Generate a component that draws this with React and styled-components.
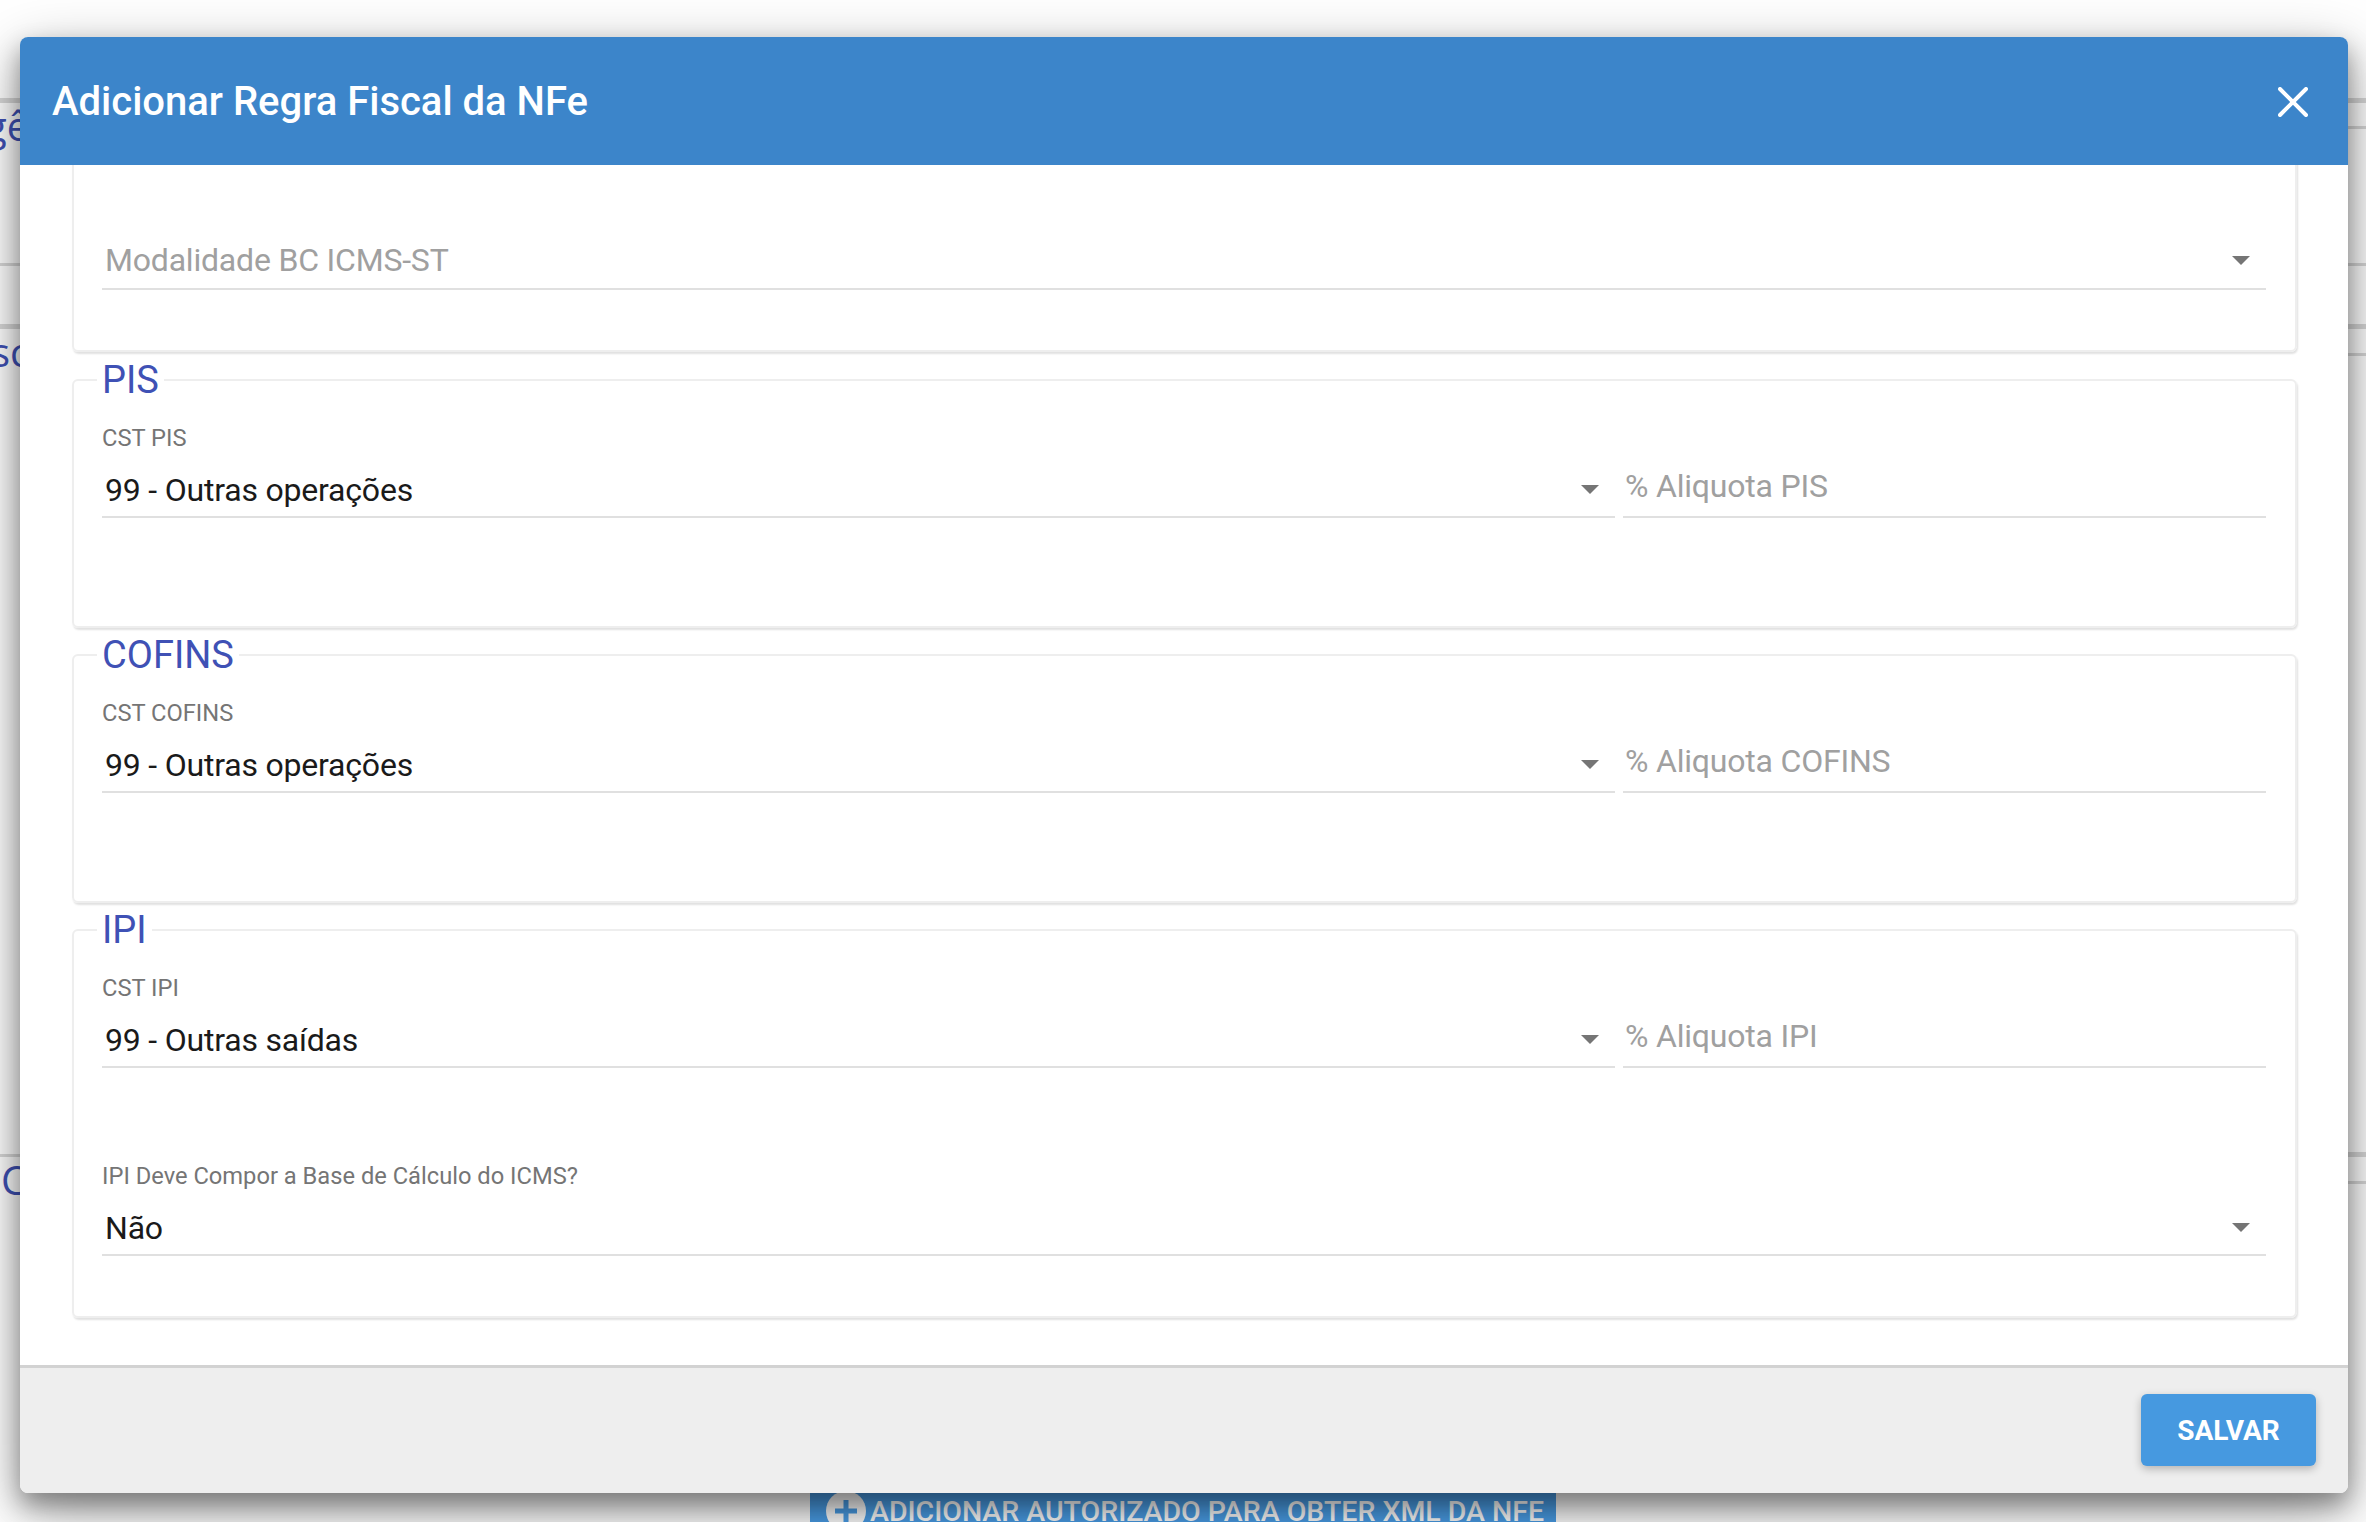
import React from "react";
import styled, { createGlobalStyle } from "styled-components";

const GlobalStyle = createGlobalStyle`
  html, body {
    margin: 0;
    padding: 0;
    background: #fff;
    font-family: Roboto, "Liberation Sans", sans-serif;
  }
`;

const Page = styled.div`
  position: relative;
  width: 2366px;
  height: 1522px;
  overflow: hidden;
  background: #fff;
`;

const BackRows = styled.div`
  display: grid;
  grid-template-columns: 1fr 1fr;
  height: 1476px;
`;

const BackColumn = styled.div`
  display: flex;
  flex-direction: column;
`;

const BackRow = styled.div`
  box-sizing: border-box;
  height: ${(p) => p.$height}px;
  border-bottom: ${(p) => p.$line || 3}px solid #d8d8d8;
  overflow: hidden;
`;

const BackHeading = styled.div`
  font-family: "Open Sans", sans-serif;
  font-size: 40px;
  line-height: 46px;
  color: #3f51b5;
  margin-left: ${(p) => p.$shift}px;
  white-space: nowrap;
`;

const BackButtonRow = styled.div`
  display: flex;
  justify-content: center;
`;

const BackButton = styled.div`
  display: flex;
  align-items: center;
  gap: 4px;
  box-sizing: border-box;
  width: 746px;
  height: 60px;
  padding: 10px 12px 0 16px;
  background: #4a9ee8;
  color: #fff;
  font-size: 28.5px;
  font-weight: 500;
  white-space: nowrap;
`;

const PlusCircle = styled.svg`
  width: 40px;
  height: 40px;
  flex: none;
`;

const Modal = styled.div`
  position: absolute;
  top: 37px;
  left: 20px;
  display: flex;
  flex-direction: column;
  width: 2328px;
  height: 1456px;
  border-radius: 8px;
  overflow: hidden;
  background: #fff;
  box-shadow: 0 12px 24px rgba(0, 0, 0, 0.35), 0 18px 60px rgba(0, 0, 0, 0.35);
`;

const ModalHeader = styled.header`
  display: flex;
  align-items: center;
  justify-content: space-between;
  flex: none;
  box-sizing: border-box;
  height: 128px;
  padding: 0 40px 0 32px;
  background: #3c85ca;
  color: #fff;
`;

const ModalTitle = styled.h2`
  margin: 0;
  font-size: 40px;
  font-weight: 500;
`;

const CloseIcon = styled.svg`
  width: 30px;
  height: 30px;
  margin-top: 2px;
`;

const ModalBody = styled.div`
  flex: 1;
  min-height: 0;
  overflow: hidden;
  padding: 0 51px 0 52px;
`;

const ClippedTop = styled.div`
  margin-top: -30px;
`;

const Group = styled.fieldset`
  box-sizing: border-box;
  height: ${(p) => p.$height}px;
  margin: 0 0 ${(p) => p.$after || 0}px;
  padding: 0 29px 0 28px;
  border: 2px solid #eeeeee;
  border-radius: 6px;
  box-shadow: 1px 2px 2px rgba(0, 0, 0, 0.12);
`;

const GroupTitle = styled.legend`
  margin-left: -5px;
  padding: 0 5px;
  font-size: 38px;
  line-height: 46px;
  color: #3f51b5;
`;

const FieldRow = styled.div`
  display: grid;
  grid-template-columns: 1513px 643px;
  gap: 8px;
  margin-top: ${(p) => p.$top}px;
`;

const Field = styled.div`
  display: flex;
  flex-direction: column;
  margin-top: ${(p) => p.$top || 0}px;
`;

const FieldLabel = styled.label`
  font-size: 23.7px;
  line-height: 28px;
  color: #757575;
`;

const SelectBox = styled.div`
  display: flex;
  align-items: center;
  justify-content: space-between;
  box-sizing: border-box;
  height: 66px;
  padding: ${(p) => (p.$muted ? 8 : 11)}px 16px 0 3px;
  border-bottom: 2px solid #e0e0e0;
  font-size: 32px;
  letter-spacing: -0.2px;
  color: ${(p) => (p.$muted ? "#a0a0a0" : "#1a1a1a")};
`;

const Caret = styled.svg`
  width: 18px;
  height: 9px;
  flex: none;
`;

const InputBox = styled.div`
  display: flex;
  align-items: center;
  box-sizing: border-box;
  align-self: end;
  height: 66px;
  padding: 6px 0 2px 2px;
  border-bottom: 2px solid #e0e0e0;
  font-size: 32px;
  letter-spacing: -0.2px;
  color: #a0a0a0;
`;

const ModalFooter = styled.footer`
  display: flex;
  justify-content: flex-end;
  flex: none;
  box-sizing: border-box;
  height: 128px;
  padding: 26px 32px 0 0;
  border-top: 3px solid #d2d2d2;
  background: #eeeeee;
`;

const SaveButton = styled.button`
  width: 175px;
  height: 72px;
  border: 0;
  border-radius: 6px;
  background: #4699e0;
  color: #fff;
  font-family: inherit;
  font-size: 28px;
  font-weight: 700;
  box-shadow: 0 3px 8px rgba(0, 0, 0, 0.25);
`;

const CaretDown = () => (
  <Caret viewBox="0 0 18 9">
    <path d="M0 0h18L9 9z" fill="#757575" />
  </Caret>
);

const Select = ({ label, value, muted, top }) => (
  <Field $top={top}>
    {label && <FieldLabel>{label}</FieldLabel>}
    <SelectBox $muted={muted}>
      <span>{value}</span>
      <CaretDown />
    </SelectBox>
  </Field>
);

const leftRows = [
  { height: 103, line: 5 },
  { height: 163, text: "gê", shift: -15 },
  { height: 63, line: 5 },
  { height: 828, text: "sc", shift: -9 },
];

const rightRows = [
  { height: 103, line: 5 },
  { height: 26 },
  { height: 137 },
  { height: 63, line: 5 },
  { height: 27 },
  { height: 801, line: 5 },
  { height: 27 },
];

const groups = [
  { title: "PIS", label: "CST PIS", value: "99 - Outras operações", rate: "% Aliquota PIS", height: 271, after: 4 },
  { title: "COFINS", label: "CST COFINS", value: "99 - Outras operações", rate: "% Aliquota COFINS", height: 271, after: 4 },
  { title: "IPI", label: "CST IPI", value: "99 - Outras saídas", rate: "% Aliquota IPI", height: 411 },
];

export default function App() {
  return (
    <Page>
      <GlobalStyle />
      <BackRows>
        <BackColumn>
          {leftRows.map((row, index) => (
            <BackRow key={index} $height={row.height} $line={row.line}>
              {row.text && <BackHeading $shift={row.shift}>{row.text}</BackHeading>}
            </BackRow>
          ))}
          <BackHeading $shift={1}>C</BackHeading>
        </BackColumn>
        <BackColumn>
          {rightRows.map((row, index) => (
            <BackRow key={index} $height={row.height} $line={row.line} />
          ))}
        </BackColumn>
      </BackRows>
      <BackButtonRow>
        <BackButton>
          <PlusCircle viewBox="0 0 40 40">
            <circle cx="20" cy="20" r="20" fill="#fff" />
            <path d="M20 9v22M9 20h22" stroke="#4a9ee8" strokeWidth="5" />
          </PlusCircle>
          ADICIONAR AUTORIZADO PARA OBTER XML DA NFE
        </BackButton>
      </BackButtonRow>

      <Modal>
        <ModalHeader>
          <ModalTitle>Adicionar Regra Fiscal da NFe</ModalTitle>
          <CloseIcon viewBox="0 0 30 30">
            <path d="M2 2l26 26M28 2L2 28" stroke="#fff" strokeWidth="4" strokeLinecap="round" />
          </CloseIcon>
        </ModalHeader>
        <ModalBody>
          <ClippedTop>
            <Group $height={217} $after={5}>
              <Field $top={87}>
                <Select value="Modalidade BC ICMS-ST" muted />
              </Field>
            </Group>
            {groups.map((group) => (
              <Group key={group.title} $height={group.height} $after={group.after}>
                <GroupTitle>{group.title}</GroupTitle>
                <FieldRow $top={21}>
                  <Select label={group.label} value={group.value} />
                  <InputBox>{group.rate}</InputBox>
                </FieldRow>
                {group.title === "IPI" && (
                  <Select top={94} label="IPI Deve Compor a Base de Cálculo do ICMS?" value="Não" />
                )}
              </Group>
            ))}
          </ClippedTop>
        </ModalBody>
        <ModalFooter>
          <SaveButton>SALVAR</SaveButton>
        </ModalFooter>
      </Modal>
    </Page>
  );
}
